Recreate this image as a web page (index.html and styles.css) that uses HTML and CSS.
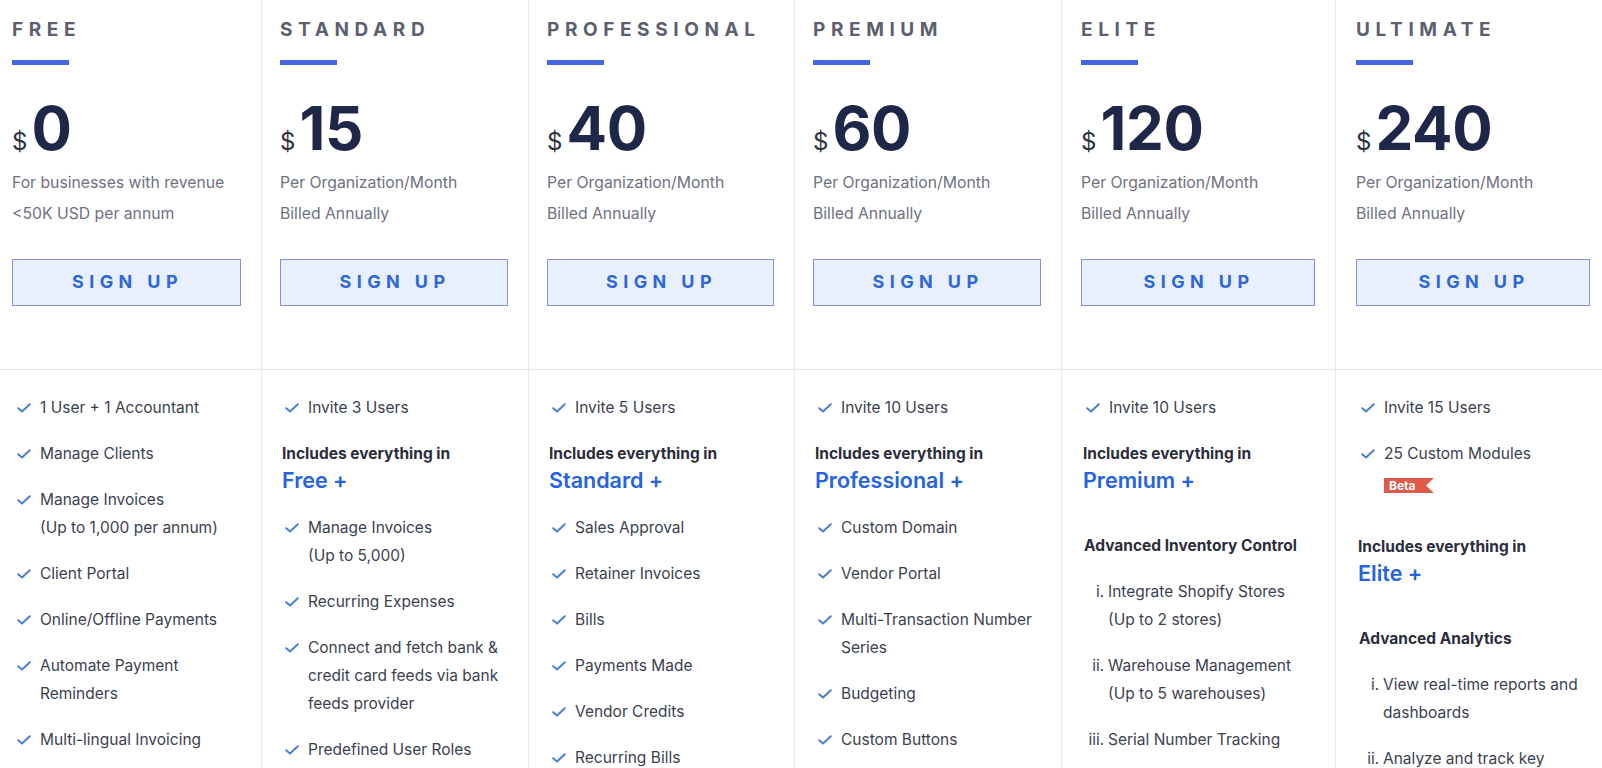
FILE: index.html
```html
<!DOCTYPE html>
<html lang="en">
<head>
<meta charset="utf-8">
<title>Pricing</title>
<link rel="stylesheet" href="styles.css">
</head>
<body>
<div class="pricing">
  <section class="plan">
    <div class="plan-head">
      <h2 class="plan-name">FREE</h2>
      <div class="plan-bar"></div>
      <div class="price"><span class="cur">$</span>0</div>
      <p class="price-note">For businesses with revenue<br>&lt;50K USD per annum</p>
      <a class="signup" href="#">SIGN UP</a>
    </div>
    <ul class="features">
      <li><svg class="check" viewBox="0 0 14 10"><path d="M1.2 5.2 L5 8.6 L12.8 1.2"/></svg><span>1 User + 1 Accountant</span></li>
      <li><svg class="check" viewBox="0 0 14 10"><path d="M1.2 5.2 L5 8.6 L12.8 1.2"/></svg><span>Manage Clients</span></li>
      <li><svg class="check" viewBox="0 0 14 10"><path d="M1.2 5.2 L5 8.6 L12.8 1.2"/></svg><span>Manage Invoices<br>(Up to 1,000 per annum)</span></li>
      <li><svg class="check" viewBox="0 0 14 10"><path d="M1.2 5.2 L5 8.6 L12.8 1.2"/></svg><span>Client Portal</span></li>
      <li><svg class="check" viewBox="0 0 14 10"><path d="M1.2 5.2 L5 8.6 L12.8 1.2"/></svg><span>Online/Offline Payments</span></li>
      <li><svg class="check" viewBox="0 0 14 10"><path d="M1.2 5.2 L5 8.6 L12.8 1.2"/></svg><span>Automate Payment Reminders</span></li>
      <li><svg class="check" viewBox="0 0 14 10"><path d="M1.2 5.2 L5 8.6 L12.8 1.2"/></svg><span>Multi-lingual Invoicing</span></li>
    </ul>
  </section>

  <section class="plan">
    <div class="plan-head">
      <h2 class="plan-name">STANDARD</h2>
      <div class="plan-bar"></div>
      <div class="price"><span class="cur">$</span>15</div>
      <p class="price-note">Per Organization/Month<br>Billed Annually</p>
      <a class="signup" href="#">SIGN UP</a>
    </div>
    <ul class="features">
      <li><svg class="check" viewBox="0 0 14 10"><path d="M1.2 5.2 L5 8.6 L12.8 1.2"/></svg><span>Invite 3 Users</span></li>
      <li class="includes"><span class="inc-label">Includes everything in</span><span class="inc-plan">Free +</span></li>
      <li><svg class="check" viewBox="0 0 14 10"><path d="M1.2 5.2 L5 8.6 L12.8 1.2"/></svg><span>Manage Invoices<br>(Up to 5,000)</span></li>
      <li><svg class="check" viewBox="0 0 14 10"><path d="M1.2 5.2 L5 8.6 L12.8 1.2"/></svg><span>Recurring Expenses</span></li>
      <li><svg class="check" viewBox="0 0 14 10"><path d="M1.2 5.2 L5 8.6 L12.8 1.2"/></svg><span>Connect and fetch bank &amp; credit card feeds via bank feeds provider</span></li>
      <li><svg class="check" viewBox="0 0 14 10"><path d="M1.2 5.2 L5 8.6 L12.8 1.2"/></svg><span>Predefined User Roles</span></li>
    </ul>
  </section>

  <section class="plan">
    <div class="plan-head">
      <h2 class="plan-name">PROFESSIONAL</h2>
      <div class="plan-bar"></div>
      <div class="price"><span class="cur">$</span>40</div>
      <p class="price-note">Per Organization/Month<br>Billed Annually</p>
      <a class="signup" href="#">SIGN UP</a>
    </div>
    <ul class="features">
      <li><svg class="check" viewBox="0 0 14 10"><path d="M1.2 5.2 L5 8.6 L12.8 1.2"/></svg><span>Invite 5 Users</span></li>
      <li class="includes"><span class="inc-label">Includes everything in</span><span class="inc-plan">Standard +</span></li>
      <li><svg class="check" viewBox="0 0 14 10"><path d="M1.2 5.2 L5 8.6 L12.8 1.2"/></svg><span>Sales Approval</span></li>
      <li><svg class="check" viewBox="0 0 14 10"><path d="M1.2 5.2 L5 8.6 L12.8 1.2"/></svg><span>Retainer Invoices</span></li>
      <li><svg class="check" viewBox="0 0 14 10"><path d="M1.2 5.2 L5 8.6 L12.8 1.2"/></svg><span>Bills</span></li>
      <li><svg class="check" viewBox="0 0 14 10"><path d="M1.2 5.2 L5 8.6 L12.8 1.2"/></svg><span>Payments Made</span></li>
      <li><svg class="check" viewBox="0 0 14 10"><path d="M1.2 5.2 L5 8.6 L12.8 1.2"/></svg><span>Vendor Credits</span></li>
      <li><svg class="check" viewBox="0 0 14 10"><path d="M1.2 5.2 L5 8.6 L12.8 1.2"/></svg><span>Recurring Bills</span></li>
    </ul>
  </section>

  <section class="plan">
    <div class="plan-head">
      <h2 class="plan-name">PREMIUM</h2>
      <div class="plan-bar"></div>
      <div class="price"><span class="cur">$</span>60</div>
      <p class="price-note">Per Organization/Month<br>Billed Annually</p>
      <a class="signup" href="#">SIGN UP</a>
    </div>
    <ul class="features">
      <li><svg class="check" viewBox="0 0 14 10"><path d="M1.2 5.2 L5 8.6 L12.8 1.2"/></svg><span>Invite 10 Users</span></li>
      <li class="includes"><span class="inc-label">Includes everything in</span><span class="inc-plan">Professional +</span></li>
      <li><svg class="check" viewBox="0 0 14 10"><path d="M1.2 5.2 L5 8.6 L12.8 1.2"/></svg><span>Custom Domain</span></li>
      <li><svg class="check" viewBox="0 0 14 10"><path d="M1.2 5.2 L5 8.6 L12.8 1.2"/></svg><span>Vendor Portal</span></li>
      <li><svg class="check" viewBox="0 0 14 10"><path d="M1.2 5.2 L5 8.6 L12.8 1.2"/></svg><span>Multi-Transaction Number Series</span></li>
      <li><svg class="check" viewBox="0 0 14 10"><path d="M1.2 5.2 L5 8.6 L12.8 1.2"/></svg><span>Budgeting</span></li>
      <li><svg class="check" viewBox="0 0 14 10"><path d="M1.2 5.2 L5 8.6 L12.8 1.2"/></svg><span>Custom Buttons</span></li>
    </ul>
  </section>

  <section class="plan">
    <div class="plan-head">
      <h2 class="plan-name">ELITE</h2>
      <div class="plan-bar"></div>
      <div class="price"><span class="cur">$</span>120</div>
      <p class="price-note">Per Organization/Month<br>Billed Annually</p>
      <a class="signup" href="#">SIGN UP</a>
    </div>
    <ul class="features">
      <li><svg class="check" viewBox="0 0 14 10"><path d="M1.2 5.2 L5 8.6 L12.8 1.2"/></svg><span>Invite 10 Users</span></li>
      <li class="includes"><span class="inc-label">Includes everything in</span><span class="inc-plan">Premium +</span></li>
      <li class="group">
        <h3 class="group-title">Advanced Inventory Control</h3>
        <ol class="roman">
          <li>Integrate Shopify Stores<br>(Up to 2 stores)</li>
          <li>Warehouse Management<br>(Up to 5 warehouses)</li>
          <li>Serial Number Tracking</li>
        </ol>
      </li>
    </ul>
  </section>

  <section class="plan">
    <div class="plan-head">
      <h2 class="plan-name">ULTIMATE</h2>
      <div class="plan-bar"></div>
      <div class="price"><span class="cur">$</span>240</div>
      <p class="price-note">Per Organization/Month<br>Billed Annually</p>
      <a class="signup" href="#">SIGN UP</a>
    </div>
    <ul class="features">
      <li><svg class="check" viewBox="0 0 14 10"><path d="M1.2 5.2 L5 8.6 L12.8 1.2"/></svg><span>Invite 15 Users</span></li>
      <li class="with-badge"><svg class="check" viewBox="0 0 14 10"><path d="M1.2 5.2 L5 8.6 L12.8 1.2"/></svg><span>25 Custom Modules<span class="beta">Beta</span></span></li>
      <li class="includes"><span class="inc-label">Includes everything in</span><span class="inc-plan">Elite +</span></li>
      <li class="group">
        <h3 class="group-title">Advanced Analytics</h3>
        <ol class="roman">
          <li>View real-time reports and dashboards</li>
          <li>Analyze and track key</li>
        </ol>
      </li>
    </ul>
  </section>
</div>
</body>
</html>
```

FILE: styles.css
```css
* {
  box-sizing: border-box;
}

html, body {
  margin: 0;
  padding: 0;
  background: #ffffff;
}

body {
  font-family: Inter, "Noto Sans", "Liberation Sans", sans-serif;
  color: #3c3f4f;
}

.pricing {
  display: grid;
  grid-template-columns: 261px 267px 266px 267px 274px 1fr;
  height: 100vh;
  overflow: hidden;
}

.plan {
  border-left: 1px solid #e4e8f3;
  padding: 0 20px 0 18px;
}

.plan:first-child {
  border-left: none;
  padding-left: 12px;
}

.plan:nth-child(5) {
  padding-left: 19px;
}

.plan:nth-child(6) {
  padding-left: 20px;
  padding-right: 12px;
}

.plan-head {
  height: 370px;
  padding-top: 18px;
  border-bottom: 1px solid #e4e8f3;
  margin: 0 -20px 0 -18px;
  padding-left: 18px;
  padding-right: 20px;
}

.plan:first-child .plan-head {
  margin-left: -12px;
  padding-left: 12px;
}

.plan:nth-child(5) .plan-head {
  margin-left: -19px;
  padding-left: 19px;
}

.plan:nth-child(6) .plan-head {
  margin-left: -20px;
  padding-left: 20px;
  margin-right: -12px;
  padding-right: 12px;
}

.plan-name {
  margin: 0;
  font-size: 19px;
  line-height: 24px;
  font-weight: 700;
  letter-spacing: 5.6px;
  color: #5c5f70;
}

.plan-bar {
  width: 57px;
  height: 5px;
  margin-top: 18px;
  background: #4464e2;
}

.price {
  margin-top: 31px;
  font-size: 60px;
  line-height: 64px;
  font-weight: 700;
  color: #1f2748;
  letter-spacing: -0.3px;
}

.cur {
  font-size: 24px;
  line-height: 1;
  font-weight: 400;
  color: #30323d;
  margin-right: 4px;
  letter-spacing: 0;
}

.price-note {
  margin: 7px 0 0;
  font-size: 15.75px;
  line-height: 31px;
  color: #6f7182;
}

.signup {
  display: block;
  margin-top: 30px;
  height: 47px;
  line-height: 44px;
  border: 1.5px solid #8a90d8;
  background: #e8f0fd;
  color: #2f66d8;
  text-align: center;
  text-decoration: none;
  font-size: 18px;
  font-weight: 700;
  letter-spacing: 5.4px;
  text-indent: 2px;
}

.features {
  list-style: none;
  margin: 0;
  padding: 24px 0 0;
}

.features > li {
  display: flex;
  align-items: flex-start;
  font-size: 15.5px;
  line-height: 28px;
  margin-bottom: 18px;
  color: #3c3f4f;
}

.check {
  flex: none;
  width: 14px;
  height: 10px;
  margin: 9px 9px 0 5px;
  fill: none;
  stroke: #4d80cf;
  stroke-width: 2;
  stroke-linecap: round;
  stroke-linejoin: round;
}

.features > li.includes {
  display: block;
  margin-bottom: 22px;
  padding-left: 2px;
}

.inc-label {
  display: block;
  font-weight: 700;
  font-size: 15.5px;
  line-height: 28px;
  color: #2b2d3b;
}

.inc-plan {
  display: block;
  font-size: 21.5px;
  line-height: 24px;
  font-weight: 600;
  color: #2563e0;
}

.with-badge > span {
  display: block;
}

.beta {
  display: block;
  width: 50px;
  height: 15px;
  margin: 10px 0 22px;
  padding-left: 5px;
  background: #de5a4b;
  color: #ffffff;
  font-size: 12px;
  line-height: 15px;
  font-weight: 700;
  clip-path: polygon(0 0, 100% 0, 84% 50%, 100% 100%, 0 100%);
}

.features > li.group {
  display: block;
  margin-top: 40px;
}

.group-title {
  margin: 0 0 18px;
  padding-left: 3px;
  font-size: 15.5px;
  line-height: 28px;
  font-weight: 700;
  color: #2b2d3b;
}

.roman {
  list-style: lower-roman;
  margin: 0;
  padding-left: 27px;
}

.roman li {
  font-size: 15.5px;
  line-height: 28px;
  margin-bottom: 18px;
  color: #3c3f4f;
}
```
